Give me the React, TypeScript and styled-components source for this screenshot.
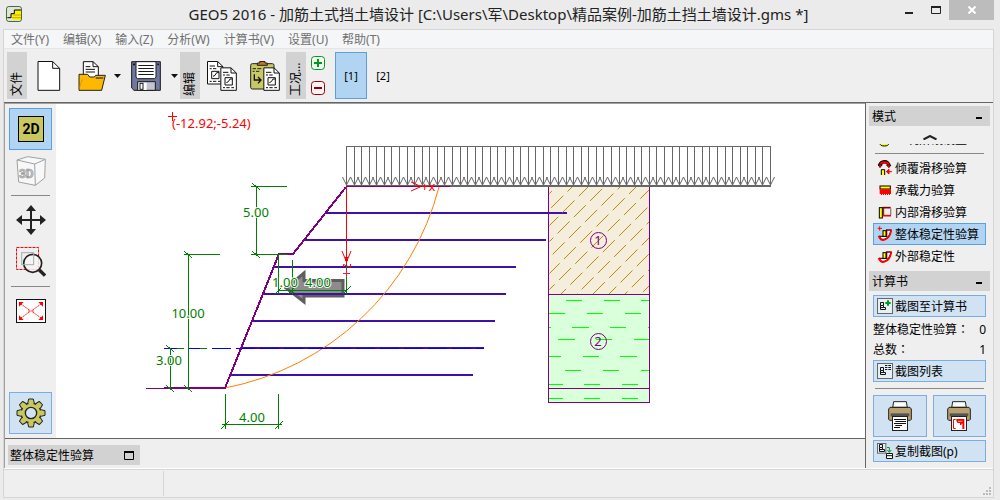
import React from "react";
import styled, { createGlobalStyle, css } from "styled-components";

const uiFont = `"Noto Sans", "Noto Sans CJK SC", sans-serif`;

const GlobalStyle = createGlobalStyle`
  *, *::before, *::after { box-sizing: border-box; }
  body {
    margin: 0;
    background: #ebebeb;
    color: #000;
    font: 12px/20px ${uiFont};
  }
  button {
    font: inherit;
    color: inherit;
    padding: 0;
    border: 0;
    background: none;
  }
  svg { display: block; flex: none; }
`;

/* ---------- window frame ---------- */

const Window = styled.div`
  display: flex;
  flex-direction: column;
  min-height: 100vh;
  padding: 0 6px 3px 3px;
  background: #ebebeb;
`;

const TitleBar = styled.header`
  display: grid;
  grid-template-columns: 100px 1fr 100px;
  height: 29px;
`;

const AppIcon = styled.span`
  padding: 6px 3px;
`;

const Title = styled.h1`
  margin: 0;
  text-align: center;
  white-space: nowrap;
  font: 400 15px/29px ${uiFont};
  color: #222;
`;

const WindowButtons = styled.div`
  display: flex;
  justify-content: flex-end;
  align-items: flex-start;
`;

const WindowButton = styled.button<{ $close?: boolean }>`
  display: grid;
  place-items: center;
  width: ${(p) => (p.$close ? 45 : 27)}px;
  height: 20px;
  background: ${(p) => (p.$close ? "#bcbcbc" : "transparent")};
`;

const Frame = styled.div`
  flex: 1;
  display: flex;
  flex-direction: column;
  border: 1px solid #d5d5d5;
  background: #efefef;
`;

const MenuBar = styled.nav`
  display: flex;
  gap: 14px;
  height: 19px;
  padding: 0 7px;
  background: #f5f6f8;
  border-bottom: 1px solid #e6e6e6;
`;

const MenuItem = styled.button`
  color: #707070;
  line-height: 20px;
  white-space: nowrap;
`;

/* ---------- toolbar ---------- */

const Toolbar = styled.div`
  display: flex;
  align-items: center;
  height: 53px;
  padding: 0 3px;
`;

const GroupLabel = styled.span<{ $spaced?: boolean }>`
  height: 47px;
  width: 20px;
  padding: 3px 0;
  margin-left: ${(p) => (p.$spaced ? 1 : 0)}px;
  background: #d2d2d2;
  writing-mode: vertical-rl;
  text-orientation: sideways;
  transform: rotate(180deg);
  white-space: nowrap;
  overflow: hidden;
`;

const ToolButton = styled.button<{ $wide?: boolean }>`
  display: grid;
  place-items: center;
  width: ${(p) => (p.$wide ? 48 : 43)}px;
  height: 47px;
`;

const CaretButton = styled.button`
  width: 9px;
  height: 47px;
  display: grid;
  place-items: center;
`;

const StageButtons = styled.div`
  display: flex;
  flex-direction: column;
  gap: 11px;
  padding: 0 10px 0 5px;
`;

const StageTab = styled.button<{ $active?: boolean }>`
  width: 32px;
  height: 47px;
  font-size: 11px;
  border: 1px solid ${(p) => (p.$active ? "#5c9fe0" : "transparent")};
  background: ${(p) => (p.$active ? "#b2d4f3" : "transparent")};
`;

/* ---------- body ---------- */

const Body = styled.div`
  flex: 1;
  display: flex;
  border-top: 1px solid #666;
`;

const Work = styled.main`
  flex: 1;
  min-width: 0;
  display: flex;
  flex-direction: column;
  border-left: 1px solid #a0a0a0;
  border-top: 1px solid #a0a0a0;
`;

const Stage = styled.div`
  flex: 1;
  display: flex;
  border-bottom: 1px solid #666;
`;

const SideTools = styled.div`
  display: flex;
  flex-direction: column;
  width: 51px;
  padding: 4px;
`;

const Rule = styled.hr`
  height: 1px;
  margin: 3px 2px;
  border: 0;
  background: #888;
`;

const SideButton = styled.button<{ $tone?: "on" | "plain" }>`
  display: grid;
  place-items: center;
  height: 42px;
  border: 1px solid transparent;
  ${(p) => p.$tone === "on" && css`border-color: #5c9fe0; background: #b2d4f3;`}
  ${(p) => p.$tone === "plain" && css`border-color: #7aade6; background: #d1e2f2;`}
`;

const Spacer = styled.div`
  flex: 1;
`;

const Canvas = styled.div`
  flex: 1;
  min-width: 0;
  overflow: hidden;
  background: #fff;
`;

const ResultStrip = styled.div`
  padding: 6px 3px 3px;
`;

const ResultTab = styled.button`
  display: flex;
  justify-content: space-between;
  align-items: center;
  width: 132px;
  height: 20px;
  padding: 0 6px 0 2px;
  background: #d2d2d2;
`;

/* ---------- right panel ---------- */

const Panel = styled.aside`
  width: 128px;
  padding: 3px 3px 5px;
  border-left: 1px solid #666;
`;

const PanelHead = styled.h2`
  display: flex;
  justify-content: space-between;
  align-items: center;
  height: 20px;
  margin: 0;
  padding: 0 8px 0 3px;
  background: #d2d2d2;
  font-size: 12px;
  font-weight: 400;
`;

const Caption = styled.span`
  padding-top: 2px;
`;

const PanelBody = styled.div`
  padding: 0 4px 4px;
`;

const ReportBody = styled(PanelBody)`
  padding: 4px 4px 0;
`;

const ScrollUp = styled.button`
  display: grid;
  place-items: center;
  width: 100%;
  height: 18px;
  padding-top: 4px;
`;

const Clipped = styled.div`
  display: flex;
  flex-direction: column;
  justify-content: flex-end;
  height: 6px;
  overflow: hidden;
`;

const ModeButton = styled.button<{ $active?: boolean; $boxed?: boolean }>`
  flex: none;
  display: flex;
  align-items: center;
  gap: 2px;
  width: 100%;
  height: 22px;
  padding: 0 3px;
  white-space: nowrap;
  border: 1px solid ${(p) => (p.$active ? "#5c9fe0" : p.$boxed ? "#7aade6" : "transparent")};
  background: ${(p) => (p.$active ? "#b2d4f3" : p.$boxed ? "#d1e2f2" : "transparent")};
`;

const Counts = styled.dl`
  display: grid;
  grid-template-columns: 1fr auto;
  margin: 3px 0 0;
  white-space: nowrap;
`;

const CountName = styled.dt``;

/* The Traditional Chinese face centres the full-width colon in its cell. */
const Colon = styled.span`
  font-family: "Noto Sans CJK TC", sans-serif;
  line-height: 1;
`;

const CountValue = styled.dd`
  margin: 0;
`;

const PanelRule = styled(Rule)`
  margin: 6px 2px;
`;

const PrintRow = styled.div`
  display: grid;
  grid-template-columns: 1fr 1fr;
  gap: 6px;
  margin-bottom: 3px;
`;

/* ---------- status bar ---------- */

const StatusBar = styled.footer`
  display: flex;
  height: 29px;
  border-top: 1px solid #fff;
`;

const StatusInner = styled.div`
  flex: 1;
  display: flex;
  justify-content: space-between;
  padding: 1px 1px 1px 0;
  border-top: 1px solid #d5d5d5;
`;

const StatusCell = styled.span`
  width: 160px;
  border-right: 1px solid #d5d5d5;
`;

const GripBox = styled.span`
  align-self: flex-end;
`;

/* ---------- icons ---------- */

const Logo = () => (
  <svg width="16" height="16" viewBox="0 0 48 48">
    <rect x="1.5" y="1.5" width="45" height="45" rx="7" fill="#dfe6d8" stroke="#456b3c" strokeWidth="3" />
    <path d="M4 42V35H15V23H25V12H45V42Z" fill="#ffef00" />
    <path d="M4 42V35H15V30L22 42Z" fill="#dfe6d8" />
    <path d="M22 27H45M17 35H45" stroke="#b8b000" strokeWidth="3" />
    <path d="M4 35H15V23H25V12H45" fill="none" stroke="#000" strokeWidth="3" />
  </svg>
);

const NewIcon = () => (
  <svg width="30" height="30" viewBox="0 0 90 90">
    <path d="M12 1.500H56L77 22V88H12Z" fill="#fff" stroke="#111" strokeWidth="3" />
    <path d="M56 2V22H77" fill="none" stroke="#111" strokeWidth="3" />
  </svg>
);

const OpenIcon = () => (
  <svg width="30" height="30" viewBox="0 0 90 90">
    <path d="M19 50V2H48L64 17V48" fill="#fff" stroke="#111" strokeWidth="3" />
    <path d="M48 2V17H64M26 17H40M26 25H54M26 33H54" fill="none" stroke="#111" strokeWidth="3" />
    <path d="M6 86V40H32L38 48H52L56 43H85L74 88H6Z" fill="#ffb800" stroke="#222" strokeWidth="3" />
    <path d="M56 51H79" stroke="#555" strokeWidth="5" />
    <path d="M6 84L16 55" stroke="#c88a00" strokeWidth="2" />
  </svg>
);

const SaveIcon = () => (
  <svg width="30" height="30" viewBox="0 0 90 90">
    <path d="M2 2H88V88H9L2 81Z" fill="#7078a0" stroke="#1a1a1a" strokeWidth="3" />
    <path d="M15 2H75V48L71 53H19L15 48Z" fill="#fff" stroke="#1a1a1a" strokeWidth="3" />
    <path d="M22 13.500H68M22 22.500H68M22 31.500H68M22 40.500H68" stroke="#1a1a1a" strokeWidth="3" />
    <path d="M20 88V62H73V88Z" fill="#c4c4cc" stroke="#1a1a1a" strokeWidth="3" />
    <rect x="23" y="65" width="24" height="22" fill="#fff" />
    <rect x="27" y="67" width="9" height="18" fill="#fff" stroke="#1a1a1a" strokeWidth="3" />
    <path d="M6 10H12M79 10H84" stroke="#111" strokeWidth="5" />
  </svg>
);

const DocShape = ({ x, y }: { x: number; y: number }) => (
  <g transform={`translate(${x} ${y})`} fill="none" stroke="#111" strokeWidth="3">
    <path d="M1.500 1.500H32L48 17V69H1.500Z" fill="#fff" />
    <path d="M32 2V17H48" />
    <path d="M8 15H24M8 23H14M18 23H28M8 61H14M18 61H28M33 61H41" />
    <path d="M14 31H36V53H14ZM18 46L24 43L29 35H36" />
  </g>
);

const CopyIcon = () => (
  <svg width="30" height="30" viewBox="0 0 90 90">
    <DocShape x={0} y={0} />
    <DocShape x={40} y={19} />
  </svg>
);

const PasteIcon = () => (
  <svg width="30" height="30" viewBox="0 0 90 90">
    <rect x="2" y="8" width="70" height="76" rx="5" fill="#c8c864" stroke="#222" strokeWidth="3" />
    <path d="M22 13V6H29V1.500H45V6H52V13Z" fill="#c07828" stroke="#222" strokeWidth="3" />
    <path d="M8 23H18M22 23H34M8 31H14M18 31H28" stroke="#222" strokeWidth="3" />
    <path d="M13 40V57H31M24 48L33 57L24 67" fill="none" stroke="#111" strokeWidth="4" />
    <DocShape x={40} y={19} />
  </svg>
);

const Caret = () => (
  <svg width="7" height="4" viewBox="0 0 7 4">
    <path d="M0 0H7L3.500 4Z" fill="#111" />
  </svg>
);

const StageIcon = ({ add }: { add?: boolean }) => (
  <svg width="14" height="14" viewBox="0 0 14 14">
    <rect x=".5" y=".5" width="13" height="13" rx="3" fill={add ? "#f2fff2" : "#fff2f2"} stroke={add ? "#009a1a" : "#900010"} />
    <path d={add ? "M3 7H11M7 3V11" : "M3 7H11"} stroke={add ? "#009a1a" : "#900010"} strokeWidth="2" />
  </svg>
);

const Icon2D = () => (
  <svg width="26" height="26" viewBox="0 0 26 26">
    <rect x=".5" y=".5" width="25" height="25" fill="#c8c85f" stroke="#000" />
    <text x="13" y="18" textAnchor="middle" fontFamily="Roboto" fontWeight="700" fontSize="14">2D</text>
  </svg>
);

const Icon3D = () => (
  <svg width="30" height="30" viewBox="0 0 90 90">
    <path d="M3 12L35 2L88 10L86 66L58 88L8 78Z" fill="#f8f8f8" stroke="#a0a0a0" strokeWidth="3" strokeLinejoin="round" />
    <path d="M3 12L56 24L88 10M56 24L58 88" fill="none" stroke="#a0a0a0" strokeWidth="3" />
    <text x="31" y="66" textAnchor="middle" fontFamily="Roboto" fontWeight="700" fontSize="36" fill="#c8c8c8" stroke="#999" strokeWidth="2">3D</text>
  </svg>
);

const MoveIcon = () => (
  <svg width="30" height="30" viewBox="0 0 90 90">
    <path d="M10 45H80M45 10V80" stroke="#222" strokeWidth="6" />
    <path d="M0 45L18 30V60ZM90 45L72 30V60ZM45 0L30 18H60ZM45 90L30 72H60Z" fill="#222" />
  </svg>
);

const ZoomIcon = () => (
  <svg width="30" height="30" viewBox="0 0 90 90">
    <rect x="1.500" y="1.500" width="66" height="66" fill="none" stroke="#f00" strokeWidth="3" strokeDasharray="9 3" />
    <circle cx="50" cy="49" r="27" fill="#f6f6f6" fillOpacity=".8" stroke="#222" strokeWidth="5" />
    <rect x="17" y="17" width="36" height="36" fill="none" stroke="#aaa" strokeWidth="3" />
    <path d="M70 69L87 86" stroke="#222" strokeWidth="10" />
  </svg>
);

const FitIcon = () => (
  <svg width="30" height="24" viewBox="0 0 90 72">
    <rect x="1.500" y="1.500" width="87" height="69" fill="#fff" stroke="#111" strokeWidth="3" />
    <path d="M15 15L40 33M75 15L50 33M15 57L40 39M75 57L50 39" stroke="#f00" strokeWidth="3" strokeDasharray="5 3" />
    <path d="M9 23V9H23ZM81 23V9H67ZM9 49V63H23ZM81 49V63H67Z" fill="#f00" />
    <path d="M39 31V41M51 31V41M39 36H51" stroke="#f00" strokeWidth="2" />
  </svg>
);

const gearTeeth = [0, 45, 90, 135, 180, 225, 270, 315];

const GearIcon = () => (
  <svg width="30" height="30" viewBox="0 0 90 90">
    <g fill="#c8c85f" stroke="#222" strokeWidth="3">
      {gearTeeth.map((a) => (
        <path key={a} d="M34 20L38 3H52L56 20" transform={`rotate(${a} 45 45)`} strokeLinejoin="round" />
      ))}
      <circle cx="45" cy="45" r="29" />
    </g>
    {gearTeeth.map((a) => (
      <path key={a} d="M37 21L40 8H50L53 21Z" transform={`rotate(${a} 45 45)`} fill="#c8c85f" />
    ))}
    <circle cx="45" cy="45" r="17" fill="#d1e2f2" stroke="#222" strokeWidth="4" />
  </svg>
);

const Minus = () => (
  <svg width="6" height="8" viewBox="0 0 6 8">
    <path d="M0 6H6" stroke="#000" strokeWidth="2" />
  </svg>
);

const modeArt: Record<string, React.ReactNode> = {
  stage: <ellipse cx="22" cy="37" rx="13" ry="8" fill="#ff0" stroke="#000" strokeWidth="3" />,
  overturn: (
    <>
      <path d="M8 18C8 2 36 0 36 18" fill="none" stroke="#000" strokeWidth="10" />
      <path d="M8 18C8 4 36 2 36 18" fill="none" stroke="#f00" strokeWidth="6" />
      <path d="M4 14H16L9 23ZM28 15H42L36 23Z" fill="#f00" stroke="#000" strokeWidth="2" />
      <path d="M13 45V29H23V45" fill="#ff0" stroke="#000" strokeWidth="3" />
      <path d="M45 35H30M36 28L28 35L36 42Z" stroke="#f00" strokeWidth="3" fill="#f00" />
    </>
  ),
  bearing: (
    <>
      <rect x="9" y="12" width="31" height="9" fill="#ff0" stroke="#000" strokeWidth="3" />
      <path d="M8 22H42V36H39V39H36V36H33V39H30V36H27V39H24V36H21V39H18V36H15V39H12V36H8Z" fill="#f00" />
    </>
  ),
  internal: (
    <>
      <path d="M16 11H41" stroke="#800000" strokeWidth="5" />
      <path d="M41 13V34" stroke="#888" strokeWidth="4" />
      <path d="M18 35H42" stroke="#f00" strokeWidth="5" />
      <path d="M20 12V33" stroke="#800000" strokeWidth="3" />
      <rect x="7" y="11" width="9" height="31" fill="#ff0" stroke="#000" strokeWidth="3" />
    </>
  ),
  slip: (
    <>
      <path d="M7 29C10 48 36 44 42 12H29V31H7Z" fill="#fff" stroke="#800000" strokeWidth="4" />
      <path d="M5 30C8 50 38 46 43 12" fill="none" stroke="#f00" strokeWidth="5" />
      <rect x="18" y="14" width="9" height="17" fill="#ff0" stroke="#000" strokeWidth="3" />
    </>
  ),
};

const ModeIcon = ({ kind, plus }: { kind: string; plus?: boolean }) => (
  <svg width="16" height="16" viewBox="0 0 48 48">
    {modeArt[kind]}
    {plus && <path d="M2 7H15M8 1V14" stroke="#f00" strokeWidth="3" />}
  </svg>
);

const ReportIcon = ({ kind }: { kind: "add" | "list" | "copy" }) => (
  <svg width="16" height="16" viewBox="0 0 48 48">
    {kind === "copy" ? (
      <rect x="1.500" y="1.500" width="25" height="29" fill="#e6eef6" stroke="#666" strokeWidth="3" />
    ) : (
      <rect x="1.500" y="1.500" width="45" height="45" fill="#e6eef6" stroke="#666" strokeWidth="3" />
    )}
    <g transform={kind === "copy" ? "translate(-3 -9)" : undefined} fill="none" stroke="#111" strokeWidth="3">
      <path d="M10.500 13.500H19.500V22.500H10.500ZM10.500 22.500V34.500H25.500V28.500H19.500V22.500M10.500 28.500H19.500" />
    </g>
    {kind === "add" && <path d="M33 7V23M25 15H41" stroke="#009a1a" strokeWidth="6" />}
    {kind === "list" && (
      <path d="M24 7.500H31M34 7.500H42M24 13.500H31M34 13.500H42M24 19.500H31M34 19.500H42" stroke="#111" strokeWidth="3" />
    )}
    {kind === "copy" && (
      <>
        <path d="M30 13.500H37V26M31 21L37 28L43 21" fill="none" stroke="#009a1a" strokeWidth="3" />
        <path d="M28.500 31.500H46.500V46.500H28.500ZM28 38H46" fill="#fff" stroke="#111" strokeWidth="3" />
      </>
    )}
  </svg>
);

const PrinterIcon = ({ picture }: { picture?: boolean }) => (
  <svg width="24" height="30" viewBox="0 0 72 90">
    <path d="M14 20L17 2H55L58 20Z" fill="#fff" stroke="#222" strokeWidth="3" />
    <path d="M2 24L6 19H66L70 24V55L67 58H5L2 55Z" fill="#b8a070" stroke="#222" strokeWidth="3" />
    <rect x="8" y="37" width="56" height="9" fill="#555" />
    <path d="M14 19H58" stroke="#222" strokeWidth="3" />
    <rect x="13.500" y="46.500" width="45" height="42" fill="#fff" stroke="#222" strokeWidth="3" />
    {picture ? (
      <>
        <path d="M26 55.500H19.500V82.500H26" fill="none" stroke="#f00" strokeWidth="3" />
        <path d="M28 54H52V84H46V72H39V66H32L28 60Z" fill="#f00" />
        <path d="M33 61H46M42 70H48" stroke="#fff" strokeWidth="2" />
      </>
    ) : (
      <path d="M18 55.500H54M22 61.500H54M18 67.500H54M22 73.500H42M18 79.500H36" stroke="#111" strokeWidth="3" />
    )}
  </svg>
);

const Grip = () => (
  <svg width="9" height="9" viewBox="0 0 9 9" fill="#bbb">
    <path d="M6 0H8V2H6ZM3 3H5V5H3ZM6 3H8V5H6ZM0 6H2V8H0ZM3 6H5V8H3ZM6 6H8V8H6Z" />
  </svg>
);

/* ---------- wall section drawing ---------- */

const LOAD_COUNT = 56;
const loadX = Array.from({ length: LOAD_COUNT + 1 }, (_, i) => 346.5 + Math.round((i * 424) / LOAD_COUNT));

const geogrids = [
  [326, 567, 213],
  [304, 546, 240],
  [273, 516, 267],
  [263, 506, 294],
  [252, 495, 321],
  [241, 484, 348],
  [230, 473, 375],
];

const clayDashes: [number, number[][]][] = [
  [300, [[566, 582], [604, 620], [641, 649]]],
  [313, [[549, 565], [587, 603], [625, 641]]],
  [327, [[549, 551], [572, 589], [610, 626], [648, 649]]],
  [339, [[558, 575], [596, 612], [634, 649]]],
  [356, [[549, 561], [583, 599], [620, 637]]],
  [370, [[565, 581], [603, 619], [641, 649]]],
  [384, [[549, 563], [584, 600], [622, 638]]],
  [398, [[549, 563], [584, 600], [622, 638]]],
];

const hatch = Array.from({ length: 14 }, (_, i) => 743 + i * 16);

const tickDown = (x: number, y: number) => `M${x - 4} ${y - 3}L${x + 4} ${y + 4}`;
const tickUp = (x: number, y: number) => `M${x - 4} ${y + 4}L${x + 4} ${y - 4}`;

const Section = () => (
  <svg width="809" height="334" viewBox="56 104 809 334" fontFamily="Noto Sans" fontSize="13">
    <defs>
      <clipPath id="sand">
        <rect x="549" y="187" width="100" height="107" />
      </clipPath>
    </defs>

    <g shapeRendering="crispEdges" fill="none">
      <g stroke="#4011a8" strokeWidth="2">
        {geogrids.slice(1).map(([a, b, y]) => <path key={y} d={`M${a} ${y}H${b}`} />)}
      </g>

      <rect x="548" y="187" width="102" height="107" fill="#f5eedc" />
      <rect x="548" y="294" width="102" height="109" fill="#d9ffdb" />
      <path d="M326 213H567" stroke="#4011a8" strokeWidth="2" />
    </g>
    <g clipPath="url(#sand)" stroke="#b88a10" fill="none">
      {hatch.map((c) => (
        <path key={c} d={`M649.500 ${c - 649.5}L549.500 ${c - 549.5}`} strokeDasharray="17 6" strokeDashoffset={(c - 743) % 23} />
      ))}
    </g>
    <g shapeRendering="crispEdges" fill="none">
      <g stroke="#00ff00">
        {clayDashes.map(([y, spans]) =>
          spans.map(([a, b]) => <path key={`${y}-${a}`} d={`M${a} ${y + 0.5}H${b}`} />)
        )}
      </g>
      <path d="M548.500 187V402.500H649.500V187M548 294.500H650M548 388.500H650" stroke="#800080" />

      <g stroke="#666">
        <path d="M346 146.500H771" />
        {loadX.map((x) => <path key={x} d={`M${x} 146V186`} />)}
      </g>
      <path d="M346 186H771" stroke="#666" strokeWidth="2" />
    </g>
    <g stroke="#666" fill="none">
      {loadX.map((x) => <path key={x} d={`M${x - 4} 177L${x} 185L${x + 4} 177`} />)}
    </g>

    <path d="M225 388A275 275 0 0 0 439 187" fill="none" stroke="#ff8000" />

    <path
      d="M286 288L304 273V280.500H343V296H304V302Z"
      fill="#8c8c8c" stroke="#5e5e5e" strokeWidth="3"
    />
    <path d="M263 294H345" stroke="#4011a8" strokeWidth="2" />

    <g shapeRendering="crispEdges" fill="none">
      <path d="M164 348.500H484" stroke="#0000ff" strokeDasharray="19 5" />
      <path d="M146 388.500H226M346 186.500H450" stroke="#800080" />
      <path d="M164 388H225L279 254H293L346 187" stroke="#800080" strokeWidth="2" />
    </g>

    <g stroke="#008000" fill="none" shapeRendering="crispEdges">
      <path d="M251 186.500H287M251 254.500H287M256.500 186V254" />
      <path d="M184 254.500H220M188.500 254V388" />
      <path d="M170.500 348V388M177 348.500H184M200 348.500H207" />
      <path d="M225.500 394V429M278.500 394V429M222 424.500H282" />
      <path d="M278.500 254V294M292.500 260V294M346.500 263V294M278 290.500H347" />
      <path d={[tickDown(256, 186), tickDown(256, 254), tickDown(188, 254), tickDown(188, 388), tickDown(170, 348), tickDown(170, 388)].join("")} />
      <path d={[tickUp(225, 425), tickUp(279, 425), tickUp(279, 290), tickUp(292, 290), tickUp(347, 290)].join("")} />
    </g>

    <g fill="#008000" stroke="#fff" strokeWidth="2" paintOrder="stroke" textAnchor="middle">
      <text x="256" y="217">5.00</text>
      <text x="188" y="318">10.00</text>
      <text x="169" y="365">3.00</text>
      <text x="252" y="422">4.00</text>
      <text x="285" y="287">1.00</text>
      <text x="318" y="287">4.00</text>
    </g>

    <g stroke="#ff0000" fill="none">
      <path d="M346.500 187V263M168 116.500H177M172.500 112V121" shapeRendering="crispEdges" />
      <path d="M342 251L346.500 262L351 251M411 182L421 186.500L411 191" />
      <path d="M345 257H348V261H345Z" fill="#f00" stroke="none" />
      <path d="M343.500 267V264.500L350.500 267.500V264" />
      <path d="M343 273.500H350M346.500 270V277" stroke="#e0204a" />
    </g>
    <text x="172" y="128" fill="#f00">(-12.92;-5.24)</text>
    <text x="421" y="191" fill="#f00">+x</text>

    <g fill="none" stroke="#800080">
      <circle cx="598.500" cy="240.500" r="8" />
      <circle cx="598.500" cy="341.500" r="8" />
    </g>
    <g fill="#800080" textAnchor="middle">
      <text x="598" y="245">1</text>
      <text x="598" y="346">2</text>
    </g>
  </svg>
);

/* ---------- page ---------- */

const menus = ["文件(Y)", "编辑(X)", "输入(Z)", "分析(W)", "计算书(V)", "设置(U)", "帮助(T)"];

const modes = [
  { label: "倾覆滑移验算", kind: "overturn" },
  { label: "承载力验算", kind: "bearing" },
  { label: "内部滑移验算", kind: "internal" },
  { label: "整体稳定性验算", kind: "slip", active: true },
  { label: "外部稳定性", kind: "slip" },
];

export default function App() {
  return (
    <>
      <GlobalStyle />
      <Window>
        <TitleBar>
          <AppIcon><Logo /></AppIcon>
          <Title>GEO5 2016 - 加筋土式挡土墙设计 [C:\Users\军\Desktop\精品案例-加筋土挡土墙设计.gms *]</Title>
          <WindowButtons>
            <WindowButton aria-label="最小化">
              <svg width="8" height="8" viewBox="0 0 8 8"><path d="M0 7H8" stroke="#222" strokeWidth="2" /></svg>
            </WindowButton>
            <WindowButton aria-label="最大化">
              <svg width="10" height="8" viewBox="0 0 10 8">
                <path d="M.5 1V7.500H9.500V1" fill="none" stroke="#222" />
                <path d="M0 1H10" stroke="#222" strokeWidth="2" />
              </svg>
            </WindowButton>
            <WindowButton $close aria-label="关闭">
              <svg width="8" height="8" viewBox="0 0 8 8"><path d="M.5 .5L7.500 7.500M7.500 .5L.5 7.500" stroke="#fff" strokeWidth="2" /></svg>
            </WindowButton>
          </WindowButtons>
        </TitleBar>

        <Frame>
          <MenuBar>
            {menus.map((m) => <MenuItem key={m}>{m}</MenuItem>)}
          </MenuBar>

          <Toolbar>
            <GroupLabel>文件</GroupLabel>
            <ToolButton aria-label="新建"><NewIcon /></ToolButton>
            <ToolButton aria-label="打开"><OpenIcon /></ToolButton>
            <CaretButton aria-label="最近文件"><Caret /></CaretButton>
            <ToolButton $wide aria-label="保存"><SaveIcon /></ToolButton>
            <CaretButton aria-label="另存为"><Caret /></CaretButton>
            <GroupLabel $spaced>编辑</GroupLabel>
            <ToolButton aria-label="复制"><CopyIcon /></ToolButton>
            <ToolButton aria-label="粘贴"><PasteIcon /></ToolButton>
            <GroupLabel>工况…</GroupLabel>
            <StageButtons>
              <button aria-label="添加工况"><StageIcon add /></button>
              <button aria-label="删除工况"><StageIcon /></button>
            </StageButtons>
            <StageTab $active>[1]</StageTab>
            <StageTab>[2]</StageTab>
          </Toolbar>

          <Body>
            <Work>
              <Stage>
                <SideTools>
                  <SideButton $tone="on" aria-label="二维"><Icon2D /></SideButton>
                  <SideButton aria-label="三维"><Icon3D /></SideButton>
                  <Rule />
                  <SideButton aria-label="平移"><MoveIcon /></SideButton>
                  <SideButton aria-label="缩放"><ZoomIcon /></SideButton>
                  <Rule />
                  <SideButton aria-label="全图"><FitIcon /></SideButton>
                  <Spacer />
                  <SideButton $tone="plain" aria-label="设置"><GearIcon /></SideButton>
                </SideTools>
                <Canvas><Section /></Canvas>
              </Stage>
              <ResultStrip>
                <ResultTab>
                  <Caption>整体稳定性验算</Caption>
                  <svg width="10" height="9" viewBox="0 0 10 9">
                    <path d="M.5 1V8.500H9.500V1" fill="none" stroke="#000" />
                    <path d="M0 1H10" stroke="#000" strokeWidth="2" />
                  </svg>
                </ResultTab>
              </ResultStrip>
            </Work>

            <Panel>
              <PanelHead><Caption>模式</Caption><Minus /></PanelHead>
              <PanelBody>
                <ScrollUp aria-label="向上滚动">
                  <svg width="14" height="5" viewBox="0 0 14 5">
                    <path d="M.5 4.500L7 1L13.500 4.500" fill="none" stroke="#222" strokeWidth="2" />
                  </svg>
                </ScrollUp>
                <Clipped>
                  <ModeButton><ModeIcon kind="stage" /><Caption>工况阶段设置</Caption></ModeButton>
                </Clipped>
                <Rule />
                {modes.map((m) => (
                  <ModeButton key={m.label} $active={m.active}>
                    <ModeIcon kind={m.kind} plus={m.active} />
                    <Caption>{m.label}</Caption>
                  </ModeButton>
                ))}
              </PanelBody>
              <PanelHead><Caption>计算书</Caption><Minus /></PanelHead>
              <ReportBody>
                <ModeButton $boxed><ReportIcon kind="add" /><Caption>截图至计算书</Caption></ModeButton>
                <Counts>
                  <CountName>整体稳定性验算<Colon>：</Colon></CountName>
                  <CountValue>0</CountValue>
                  <CountName>总数<Colon>：</Colon></CountName>
                  <CountValue>1</CountValue>
                </Counts>
                <ModeButton $boxed><ReportIcon kind="list" /><Caption>截图列表</Caption></ModeButton>
                <PanelRule />
                <PrintRow>
                  <SideButton $tone="plain" aria-label="打印计算书"><PrinterIcon /></SideButton>
                  <SideButton $tone="plain" aria-label="打印截图"><PrinterIcon picture /></SideButton>
                </PrintRow>
                <ModeButton $boxed><ReportIcon kind="copy" /><Caption>复制截图(p)</Caption></ModeButton>
              </ReportBody>
            </Panel>
          </Body>

          <StatusBar>
            <StatusInner>
              <StatusCell />
              <GripBox><Grip /></GripBox>
            </StatusInner>
          </StatusBar>
        </Frame>
      </Window>
    </>
  );
}
